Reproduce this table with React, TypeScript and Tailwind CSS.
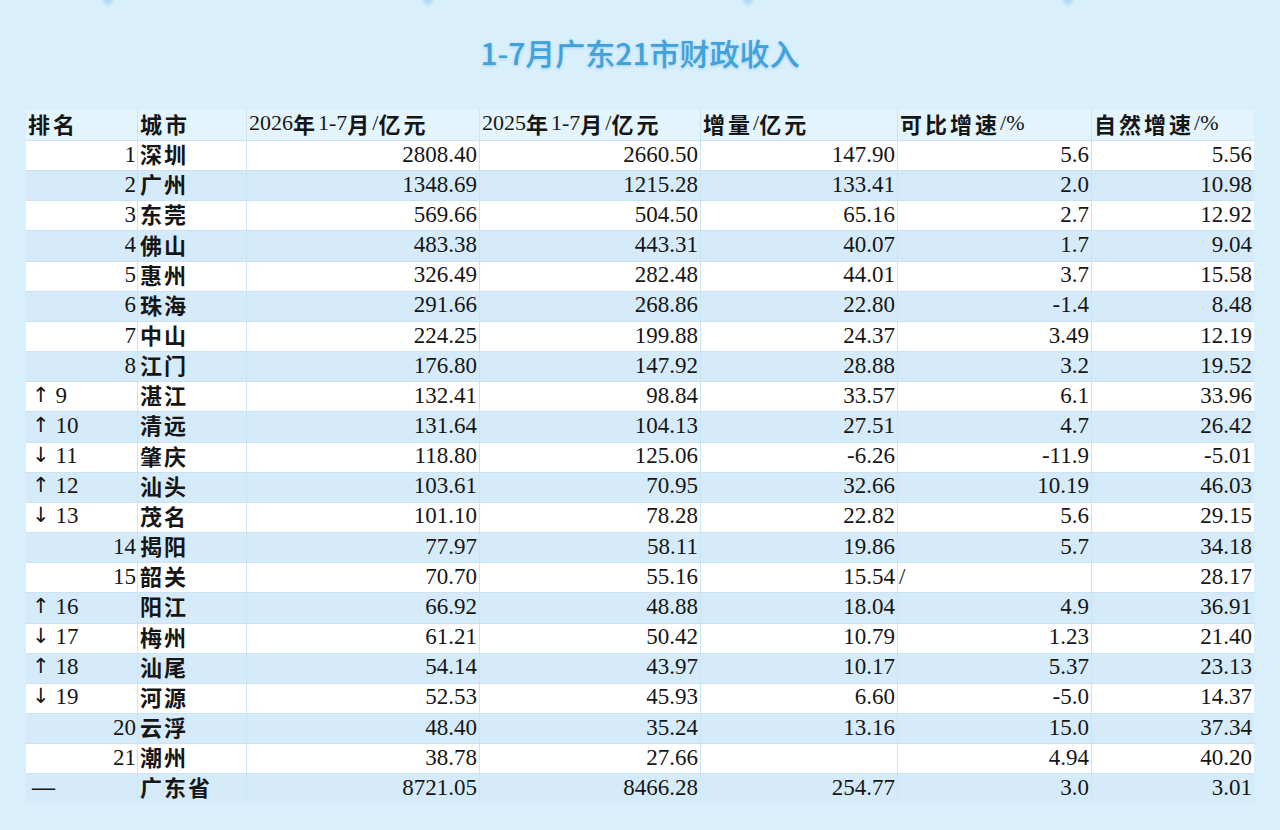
import React from 'react';

type Row = {
  rank: string;
  arrow?: string;
  city: string;
  y26: string;
  y25: string;
  inc: string;
  comp: string;
  nat: string;
};

const rows: Row[] = [
  { rank: '1', city: '深圳', y26: '2808.40', y25: '2660.50', inc: '147.90', comp: '5.6', nat: '5.56' },
  { rank: '2', city: '广州', y26: '1348.69', y25: '1215.28', inc: '133.41', comp: '2.0', nat: '10.98' },
  { rank: '3', city: '东莞', y26: '569.66', y25: '504.50', inc: '65.16', comp: '2.7', nat: '12.92' },
  { rank: '4', city: '佛山', y26: '483.38', y25: '443.31', inc: '40.07', comp: '1.7', nat: '9.04' },
  { rank: '5', city: '惠州', y26: '326.49', y25: '282.48', inc: '44.01', comp: '3.7', nat: '15.58' },
  { rank: '6', city: '珠海', y26: '291.66', y25: '268.86', inc: '22.80', comp: '-1.4', nat: '8.48' },
  { rank: '7', city: '中山', y26: '224.25', y25: '199.88', inc: '24.37', comp: '3.49', nat: '12.19' },
  { rank: '8', city: '江门', y26: '176.80', y25: '147.92', inc: '28.88', comp: '3.2', nat: '19.52' },
  { rank: '9', arrow: '↑', city: '湛江', y26: '132.41', y25: '98.84', inc: '33.57', comp: '6.1', nat: '33.96' },
  { rank: '10', arrow: '↑', city: '清远', y26: '131.64', y25: '104.13', inc: '27.51', comp: '4.7', nat: '26.42' },
  { rank: '11', arrow: '↓', city: '肇庆', y26: '118.80', y25: '125.06', inc: '-6.26', comp: '-11.9', nat: '-5.01' },
  { rank: '12', arrow: '↑', city: '汕头', y26: '103.61', y25: '70.95', inc: '32.66', comp: '10.19', nat: '46.03' },
  { rank: '13', arrow: '↓', city: '茂名', y26: '101.10', y25: '78.28', inc: '22.82', comp: '5.6', nat: '29.15' },
  { rank: '14', city: '揭阳', y26: '77.97', y25: '58.11', inc: '19.86', comp: '5.7', nat: '34.18' },
  { rank: '15', city: '韶关', y26: '70.70', y25: '55.16', inc: '15.54', comp: '/', nat: '28.17' },
  { rank: '16', arrow: '↑', city: '阳江', y26: '66.92', y25: '48.88', inc: '18.04', comp: '4.9', nat: '36.91' },
  { rank: '17', arrow: '↓', city: '梅州', y26: '61.21', y25: '50.42', inc: '10.79', comp: '1.23', nat: '21.40' },
  { rank: '18', arrow: '↑', city: '汕尾', y26: '54.14', y25: '43.97', inc: '10.17', comp: '5.37', nat: '23.13' },
  { rank: '19', arrow: '↓', city: '河源', y26: '52.53', y25: '45.93', inc: '6.60', comp: '-5.0', nat: '14.37' },
  { rank: '20', city: '云浮', y26: '48.40', y25: '35.24', inc: '13.16', comp: '15.0', nat: '37.34' },
  { rank: '21', city: '潮州', y26: '38.78', y25: '27.66', inc: '', comp: '4.94', nat: '40.20' },
  { rank: '—', arrow: '', city: '广东省', y26: '8721.05', y25: '8466.28', inc: '254.77', comp: '3.0', nat: '3.01' },
];

const serif = "font-['Liberation_Serif','Noto_Sans_CJK_SC',serif]";

// CJK characters bold, digits stay regular serif
const Mixed = ({ text }: { text: string }) => (
  <>
    {text.split(/([\u4e00-\u9fff]+)/).map((part, i) =>
      /[\u4e00-\u9fff]/.test(part) ? (
        <span key={i} className="font-['Noto_Sans_CJK_SC',sans-serif] font-bold tracking-[3px]">
          {part}
        </span>
      ) : (
        <span key={i}>{part}</span>
      )
    )}
  </>
);

const Dot = () => <div className="w-[10px] h-[10px] rounded-full bg-[#b7ddf5] -mt-[5px] blur-[1px]" />;

const cols = 'grid grid-cols-[111px_109px_233px_221px_197px_194px_163px]';
const num = 'flex items-center justify-end pr-[2px] pb-[3px] border-l border-[#cbe5f5]';
const head = 'pl-[2px] pb-[4px] border-l border-[#cbe5f5] flex items-center';

export default function App() {
  return (
    <div className={`w-[1280px] h-[830px] bg-[#d9effc] overflow-hidden text-[#161616] ${serif}`}>
      {/* decorative dots at top edge */}
      <div className="flex h-0 pl-[103px] gap-[310px]">
        <Dot />
        <Dot />
        <Dot />
        <Dot />
      </div>

      <div className="h-[110px] flex items-center justify-center">
        <h1 className="font-['Noto_Sans_CJK_SC',sans-serif] text-[30px] font-medium text-[#3fa2da] [text-shadow:0_1px_3px_rgba(60,150,210,0.35)] -mt-[6px]">
          1-7月广东21市财政收入
        </h1>
      </div>

      <div className="mx-[26px] w-[1228px] leading-none">
        <div className={`${cols} h-[30px] bg-[#e3f4fd] text-[22px]`}>
          <div className="pl-[2px] pb-[4px] flex items-center"><Mixed text="排名" /></div>
          <div className={head}><Mixed text="城市" /></div>
          <div className={head}><Mixed text="2026年1-7月/亿元" /></div>
          <div className={head}><Mixed text="2025年1-7月/亿元" /></div>
          <div className={head}><Mixed text="增量/亿元" /></div>
          <div className={head}><Mixed text="可比增速/%" /></div>
          <div className={head}><Mixed text="自然增速/%" /></div>
        </div>

        {rows.map((r, i) => (
          <div
            key={i}
            className={`${cols} h-[30.17px] text-[23px] border-t border-[#c9e3f4] ${
              i % 2 === 0 ? 'bg-white' : 'bg-[#d5ebfa]'
            }`}
          >
            {r.arrow !== undefined ? (
              <div className="flex items-center pl-[6px] pb-[3px] gap-[6px]">
                {r.arrow && <span className="font-['DejaVu_Sans',sans-serif] text-[21px]">{r.arrow}</span>}
                <span className={r.rank === '—' ? 'font-bold' : ''}>{r.rank}</span>
              </div>
            ) : (
              <div className="flex items-center justify-end pr-[1px] pb-[3px]">{r.rank}</div>
            )}
            <div className="flex items-center pl-[2px] pb-[5px] border-l border-[#cbe5f5] font-['Noto_Sans_CJK_SC',sans-serif] font-bold text-[22px] tracking-[2px]">
              {r.city}
            </div>
            <div className={num}>{r.y26}</div>
            <div className={num}>{r.y25}</div>
            <div className={num}>{r.inc}</div>
            {r.comp === '/' ? (
              <div className="flex items-center pl-[1px] pb-[3px] border-l border-[#cbe5f5]">/</div>
            ) : (
              <div className={num}>{r.comp}</div>
            )}
            <div className={num}>{r.nat}</div>
          </div>
        ))}
      </div>
    </div>
  );
}
